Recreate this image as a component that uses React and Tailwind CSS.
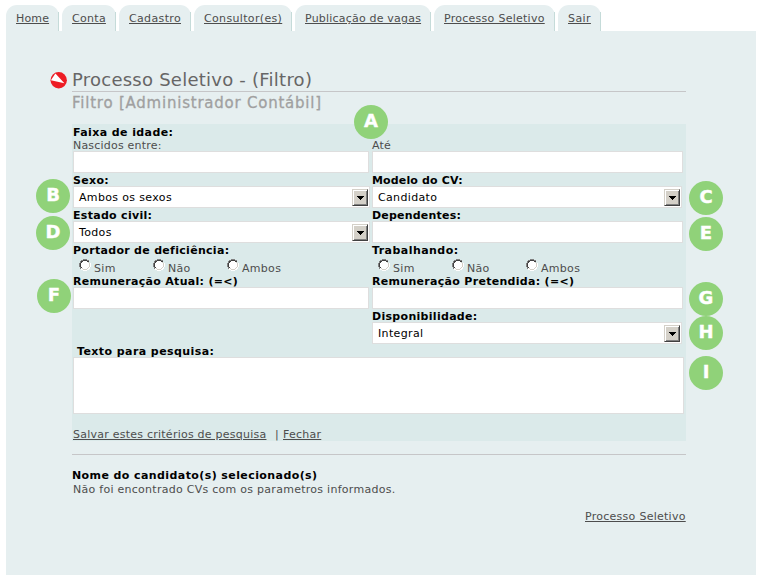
const TABS = [
  { label: 'Home', box: 'w-[53px]', text: 'tracking-[0.15px]' },
  { label: 'Conta', box: 'w-[54px]', text: 'tracking-[0.3px]' },
  { label: 'Cadastro', box: 'w-[72px]', text: 'tracking-[0.35px]' },
  { label: 'Consultor(es)', box: 'w-[98px]', text: 'tracking-[0.34px]' },
  { label: 'Publicação de vagas', box: 'w-[136px]', text: 'tracking-[0.2px]' },
  { label: 'Processo Seletivo', box: 'w-[121px]', text: 'tracking-[0.27px]' },
  { label: 'Sair', box: 'w-[43px]', text: 'tracking-[0.4px]' },
];

const BADGES = [
  { letter: 'A', pos: 'left-[354px] top-[105px]' },
  { letter: 'B', pos: 'left-[36px] top-[179px]' },
  { letter: 'C', pos: 'left-[689px] top-[181px]' },
  { letter: 'D', pos: 'left-[36px] top-[216px]' },
  { letter: 'E', pos: 'left-[689px] top-[217px]' },
  { letter: 'F', pos: 'left-[37px] top-[279px]' },
  { letter: 'G', pos: 'left-[689px] top-[282px]' },
  { letter: 'H', pos: 'left-[689px] top-[316px]' },
  { letter: 'I', pos: 'left-[689px] top-[356px]' },
];

function Label({ children, className = '', spacing = 'tracking-[0.3px]' }) {
  return (
    <div className={`h-[13px] leading-4 font-bold text-black whitespace-nowrap ${spacing} ${className}`}>
      <span>{children}</span>
    </div>
  );
}

function Input({ className = '' }) {
  return <div className={`h-[22px] border border-[#dedede] bg-white ${className}`} />;
}

function Select({ value, className = '' }) {
  return (
    <div className={`flex h-[22px] items-start justify-between border border-[#dedede] bg-white pt-[2px] pl-[5px] pr-px text-black ${className}`}>
      <span className="leading-[18px] tracking-[0.35px]">{value}</span>
      <div className="flex h-[17px] w-4 items-center justify-center border border-t-[#d4d0c8] border-l-[#d4d0c8] border-r-[#404040] border-b-[#404040] bg-[#d4d0c8] shadow-[inset_1px_1px_0_#fff,inset_-1px_-1px_0_#808080]">
        <svg width="7" height="4" viewBox="0 0 7 4" shapeRendering="crispEdges">
          <path d="M0 0h7v1H0zM1 1h5v1H1zM2 2h3v1H2zM3 3h1v1H3z" fill="#000" />
        </svg>
      </div>
    </div>
  );
}

function Radio({ children }) {
  return (
    <div className="flex w-[74px] gap-[3px]">
      <svg className="mt-[3px] shrink-0" width="12" height="12" viewBox="0 0 12 12" shapeRendering="crispEdges">
        <path d="M4 1h4v1h2v2h1v4h-1v2H8v1H4v-1H2V8H1V4h1V2h2z" fill="#fff" />
        <path d="M4 0h4v1H4zM2 1h2v1H2zM8 1h2v1H8zM1 2h1v2H1zM0 4h1v4H0zM1 8h1v2H1z" fill="#808080" />
        <path d="M4 1h4v1H4zM2 2h2v1H2zM8 2h2v1H8zM2 3h1v1H2zM1 4h1v4H1zM2 8h1v1H2z" fill="#404040" />
        <path d="M9 3h1v1H9zM10 4h1v4h-1zM9 8h1v1H9zM8 9h1v1H8zM4 10h4v1H4zM3 9h1v1H3z" fill="#d4d0c8" />
        <path d="M11 4h1v4h-1zM10 8h1v2h-1zM8 10h2v1H8zM4 11h4v1H4zM2 10h2v1H2z" fill="#fff" />
      </svg>
      <span className="mt-[6px] leading-[14px] tracking-[0.3px]">{children}</span>
    </div>
  );
}

function Radios() {
  return (
    <div className="flex h-[18px] pl-[6px]">
      <Radio>Sim</Radio>
      <Radio>Não</Radio>
      <Radio>Ambos</Radio>
    </div>
  );
}

export default function App() {
  return (
    <div className="relative h-[584px] w-[764px] overflow-hidden bg-white pl-[6px] pt-[5px] font-['DejaVu_Sans',Verdana,sans-serif] text-[11px] text-[#4d4d4d]">
      <nav className="flex h-[26px] gap-[3px]">
        {TABS.map((t) => (
          <div key={t.label} className={`flex rounded-t-[11px] bg-[#e6eff0] ${t.box}`}>
            <a className={`flex-1 pl-[10px] pt-[7px] leading-[14px] whitespace-nowrap underline underline-offset-1 ${t.text}`}>{t.label}</a>
            <div className="mt-[7px] w-px bg-[#c5dbd9]" />
          </div>
        ))}
      </nav>

      <main className="h-[544px] w-[750px] bg-[#e6eff0] pl-[66px] pt-[36px]">
        <header className="w-[614px]">
          <div className="-ml-[22px] flex h-6 gap-[5px]">
            <svg className="mt-[5px] shrink-0" width="17" height="17" viewBox="0 0 17 17">
              <circle cx="8.7" cy="8.3" r="8.2" fill="#ed1c24" />
              <path d="M5.4 1.4L14.4 11.2L0.9 8.2z" fill="#fff" />
            </svg>
            <h1 className="pt-px text-[18px] leading-6 tracking-[0.24px] whitespace-nowrap text-[#666]"><span>Processo Seletivo - (Filtro)</span></h1>
          </div>
          <div className="h-px bg-[#c6c6c8]" />
          <h2 className="h-8 text-[15px] leading-[22px] tracking-[0.77px] whitespace-nowrap text-[#a0a0a0] [-webkit-text-stroke:0.3px_#a0a0a0]"><span>Filtro [Administrador Contábil]</span></h2>
        </header>

        <section className="h-[317px] w-[614px] bg-[#dbeaea] pl-px">
          <Label className="pt-px" spacing="tracking-[0.4px]">Faixa de idade:</Label>
          <div className="grid grid-cols-[299px_312px]">
            <div className="h-[14px] leading-[18px] tracking-[0.2px]">Nascidos entre:</div>
            <div className="h-[14px] leading-[18px] tracking-[0.2px]">Até</div>
            <Input className="w-[296px]" />
            <Input className="w-[311px]" />
            <Label>Sexo:</Label>
            <Label spacing="tracking-[0.15px]">Modelo do CV:</Label>
            <Select value="Ambos os sexos" className="w-[297px]" />
            <Select value="Candidato" className="w-[310px]" />
            <Label>Estado civil:</Label>
            <Label spacing="tracking-[0.2px]">Dependentes:</Label>
            <Select value="Todos" className="w-[297px]" />
            <Input className="w-[311px]" />
            <Label>Portador de deficiência:</Label>
            <Label spacing="tracking-[0.45px]">Trabalhando:</Label>
            <Radios />
            <Radios />
            <Label>Remuneração Atual: (=&lt;)</Label>
            <Label>Remuneração Pretendida: (=&lt;)</Label>
            <Input className="w-[296px]" />
            <Input className="w-[311px]" />
            <Label className="col-start-2">Disponibilidade:</Label>
            <Select value="Integral" className="col-start-2 w-[310px]" />
          </div>
          <Label className="pl-1" spacing="tracking-[0.42px]">Texto para pesquisa:</Label>
          <div className="h-[57px] w-[611px] border border-[#dedede] bg-white" />
          <div className="flex pt-[14px] leading-[14px] whitespace-nowrap">
            <a className="mr-auto tracking-[0.24px] underline underline-offset-1">Salvar estes critérios de pesquisa</a>
            <div className="flex w-[411px]">
              <span className="w-2">|</span>
              <a className="tracking-[0.25px] underline underline-offset-1">Fechar</a>
            </div>
          </div>
        </section>

        <section className="mt-[13px] w-[614px] border-t border-[#c6c6c8] pt-[14px] leading-[14px]">
          <div className="font-bold tracking-[0.41px] text-black"><span>Nome do candidato(s) selecionado(s)</span></div>
          <div className="pl-px tracking-[0.27px]">Não foi encontrado CVs com os parametros informados.</div>
          <div className="mt-[13px] flex justify-end">
            <a className="w-[101px] whitespace-nowrap tracking-[0.27px] underline underline-offset-1">Processo Seletivo</a>
          </div>
        </section>
      </main>

      {BADGES.map((b) => (
        <div key={b.letter} className={`absolute flex h-[34px] w-[34px] justify-center rounded-full bg-[#90d279] text-[18px] leading-[32px] font-bold text-white [-webkit-text-stroke:0.4px_#fff] ${b.pos}`}>
          {b.letter}
        </div>
      ))}
    </div>
  );
}
